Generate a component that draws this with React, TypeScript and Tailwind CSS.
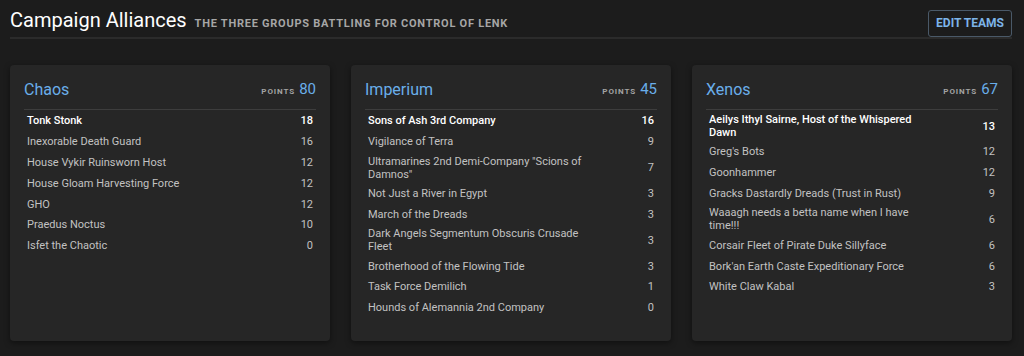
type Team = { name: string; points: number };

type Alliance = {
  name: string;
  points: number;
  teams: Team[];
};

const alliances: Alliance[] = [
  {
    name: 'Chaos',
    points: 80,
    teams: [
      { name: 'Tonk Stonk', points: 18 },
      { name: 'Inexorable Death Guard', points: 16 },
      { name: 'House Vykir Ruinsworn Host', points: 12 },
      { name: 'House Gloam Harvesting Force', points: 12 },
      { name: 'GHO', points: 12 },
      { name: 'Praedus Noctus', points: 10 },
      { name: 'Isfet the Chaotic', points: 0 },
    ],
  },
  {
    name: 'Imperium',
    points: 45,
    teams: [
      { name: 'Sons of Ash 3rd Company', points: 16 },
      { name: 'Vigilance of Terra', points: 9 },
      { name: 'Ultramarines 2nd Demi-Company "Scions of Damnos"', points: 7 },
      { name: 'Not Just a River in Egypt', points: 3 },
      { name: 'March of the Dreads', points: 3 },
      { name: 'Dark Angels Segmentum Obscuris Crusade Fleet', points: 3 },
      { name: 'Brotherhood of the Flowing Tide', points: 3 },
      { name: 'Task Force Demilich', points: 1 },
      { name: 'Hounds of Alemannia 2nd Company', points: 0 },
    ],
  },
  {
    name: 'Xenos',
    points: 67,
    teams: [
      { name: 'Aeilys Ithyl Sairne, Host of the Whispered Dawn', points: 13 },
      { name: "Greg's Bots", points: 12 },
      { name: 'Goonhammer', points: 12 },
      { name: 'Gracks Dastardly Dreads (Trust in Rust)', points: 9 },
      { name: 'Waaagh needs a betta name when I have time!!!', points: 6 },
      { name: 'Corsair Fleet of Pirate Duke Sillyface', points: 6 },
      { name: "Bork'an Earth Caste Expeditionary Force", points: 6 },
      { name: 'White Claw Kabal', points: 3 },
    ],
  },
];

function AllianceCard({ alliance }: { alliance: Alliance }) {
  return (
    <div className="bg-[#262626] rounded-[4px] shadow-[0_2px_6px_rgba(0,0,0,0.45)] px-[14px] pt-[14px] pb-[23px]">
      {/* Header */}
      <div className="flex items-center justify-between h-[22px] mb-[8px]">
        <h3 className="text-[16px] text-[#6aaeea]">{alliance.name}</h3>
        <div className="flex items-baseline gap-[4px]">
          <span className="text-[8px] font-bold tracking-[0.9px] text-[#a3a3a3]">POINTS</span>
          <span className="text-[15px] text-[#6aaeea]">{alliance.points}</span>
        </div>
      </div>

      {/* Team list */}
      <ul className="border-t border-[#3d3d3d] pt-[1px]">
        {alliance.teams.map((team, index) => (
          <li
            key={team.name}
            className={`flex items-center min-h-[20.8px] px-[3px] py-[2.5px] text-[11px] leading-[13px] ${
              index === 0 ? 'text-white font-medium' : 'text-[#c2c2c2]'
            }`}
          >
            <span className="flex-1 pr-3">{team.name}</span>
            <span className="w-[48px] text-right">{team.points}</span>
          </li>
        ))}
      </ul>
    </div>
  );
}

export default function App() {
  return (
    <div className="min-h-[356px] bg-[#1c1c1c] pl-[10px] pr-[12px] pt-[8px] font-['Roboto',sans-serif]">
      {/* Page header */}
      <div className="flex items-end justify-between border-b-2 border-[#2b2b2b]">
        <div className="flex items-baseline gap-[8px] pb-[4px]">
          <h1 className="text-[20px] leading-[24px] text-white">Campaign Alliances</h1>
          <p className="text-[11px] font-bold tracking-[0.75px] text-[#a6a6a6]">
            THE THREE GROUPS BATTLING FOR CONTROL OF LENK
          </p>
        </div>
        <button className="w-[84px] h-[27px] border border-[#4a5968] rounded-[3px] text-[12px] font-bold text-[#7db4e8]">
          EDIT TEAMS
        </button>
      </div>

      {/* Alliances */}
      <div className="grid grid-cols-3 gap-[21px] mt-[26px]">
        {alliances.map((alliance) => (
          <AllianceCard key={alliance.name} alliance={alliance} />
        ))}
      </div>
    </div>
  );
}
